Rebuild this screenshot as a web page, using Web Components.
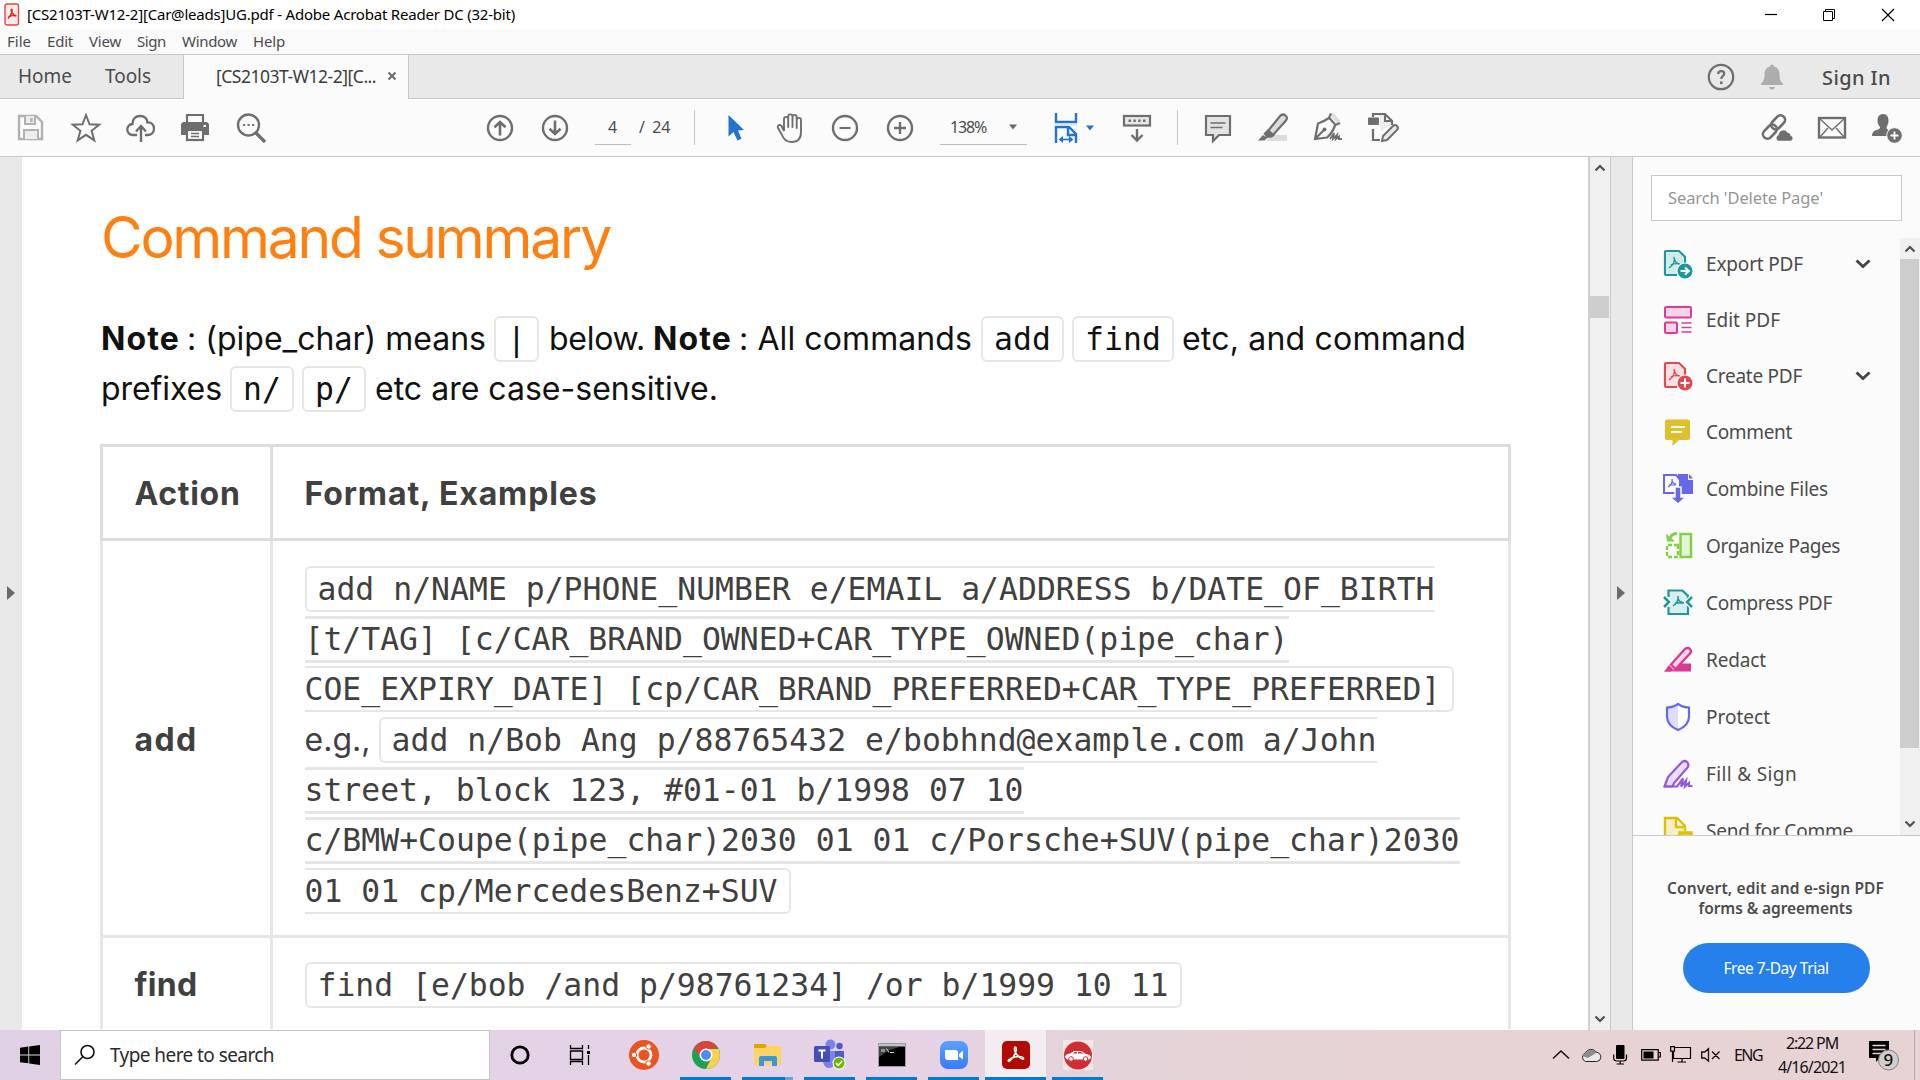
<!DOCTYPE html>
<html lang="en"><head><meta charset="utf-8"><title>Acrobat Reader</title>
<style>
html,body{margin:0;padding:0;width:1920px;height:1080px;overflow:hidden;background:#fff}
body{font-family:"Noto Sans","Open Sans",sans-serif;color:#4b4b4b}
</style></head><body>
<acro-desktop></acro-desktop>
<script>
const G='#6e6e6e';
const page=(c,f)=>`<path d="M3 2h13l6 6v8M14 26H3a1 1 0 0 1-1-1V3a1 1 0 0 1 1-1" fill="none" stroke="${c}" stroke-width="2.2"/><path d="M3 3h12l6 6v8l-7 8H3z" fill="${f}"/><path d="M11 8q2 6-5 11M11 8q1 7 6 7M8 16q4-2 9-1" fill="none" stroke="${c}" stroke-width="1.4"/>`;
const ICONS={
pdf:[16,24,`<rect x="1" y="1" width="13.5" height="21" rx="2" fill="#fbeceb" stroke="#e8443b" stroke-width="1.4"/><path d="M7.4 6c1.6 1 .2 6-3.400 9.500M7.400 6c-1 2 1.600 6.500 5 7M4.500 14q4-2.500 8-1" fill="none" stroke="#e02a20" stroke-width="1.6"/>`],
min:[14,14,`<path d="M1 6.500h12" stroke="#000" stroke-width="1.200"/>`],
max:[14,14,`<path d="M1.500 3.500h9v9h-9zM3.500 3.500v-2h9v9h-2" fill="none" stroke="#000"/>`],
close:[14,14,`<path d="M1 1l12 12M13 1L1 13" stroke="#000" stroke-width="1.200"/>`],
tabx:[10,10,`<path d="M1.500 1.500l7 7M8.500 1.500l-7 7" stroke="#6a6a6a" stroke-width="2"/>`],
help:[28,28,`<circle cx="14" cy="14" r="12.200" fill="none" stroke="${G}" stroke-width="2.200"/><path d="M11 11q.500-2.800 3.200-2.800 3 0 3 2.500 0 1.400-1.700 2.600-1.200.9-1.200 2.700" fill="none" stroke="${G}" stroke-width="2.200"/><rect x="13" y="18.500" width="2.600" height="2.600" fill="${G}"/>`],
bell:[24,28,`<path d="M12 1.500a2 2 0 0 1 2 2c4 1 5.500 4 5.500 8 0 5 1 7 3.500 9v1.500H1V20.500c2.500-2 3.500-4 3.500-9 0-4 1.500-7 5.500-8a2 2 0 0 1 2-2zM9 24h6q-.500 2.500-3 2.500T9 24z" fill="#adadad"/>`],
save:[32,32,`<path d="M4 4h17l6 6v17H4z" fill="none" stroke="#b1b1b1" stroke-width="2.400"/><path d="M10 4v8h10V4M9 27v-9h14v9" fill="#ededed" stroke="#b1b1b1" stroke-width="2"/><path d="M16.500 6v4" stroke="#b1b1b1" stroke-width="2.400"/>`],
star:[32,32,`<path d="M16 3l3.500 9.300 9.700.400-7.600 6.100 2.700 9.500-8.300-5.500-8.300 5.500 2.700-9.500-7.600-6.100 9.700-.400z" fill="none" stroke="${G}" stroke-width="2"/>`],
upload:[32,32,`<path d="M12 23H8a5.500 5.500 0 0 1-.500-11C7.500 6.500 11 4 15 4c4 0 7 2.500 7.500 6.500 4-.5 6.500 2.500 6.500 6 0 3.800-2.500 6.500-6.500 6.500h-2.500" fill="none" stroke="${G}" stroke-width="2.300"/><path d="M16 30V14.500M11 19.500l5-5.500 5 5.500" fill="none" stroke="${G}" stroke-width="2.400"/>`],
print:[32,32,`<path d="M8 10V3h16v7" fill="#fbfbfb" stroke="${G}" stroke-width="2.200"/><path d="M4 10h24l2 2v11H2V12z" fill="${G}"/><rect x="8" y="18" width="16" height="10" fill="#fbfbfb" stroke="${G}" stroke-width="2.200"/><path d="M12 21.500h8M12 24.500h8" stroke="${G}" stroke-width="1.400"/><rect x="24.500" y="13" width="2.500" height="2" fill="#fff"/>`],
find:[32,32,`<circle cx="13.500" cy="13" r="10.500" fill="none" stroke="${G}" stroke-width="2.400"/><path d="M21 21l9 9" stroke="${G}" stroke-width="3.200"/><path d="M8 13h2.200m2.300 0h2.200m2.300 0h2.200" stroke="${G}" stroke-width="2.200"/>`],
up:[28,28,`<circle cx="14" cy="14" r="12" fill="none" stroke="${G}" stroke-width="2.400"/><path d="M14 21.500V8M8.500 13.300L14 8l5.500 5.300" fill="none" stroke="${G}" stroke-width="2.600"/>`],
down:[28,28,`<circle cx="14" cy="14" r="12" fill="none" stroke="${G}" stroke-width="2.400"/><path d="M14 6.500V20M8.500 14.700L14 20l5.500-5.300" fill="none" stroke="${G}" stroke-width="2.600"/>`],
cursor:[18,28,`<path d="M1.500 1v21.500l5-4.500 4 8.500 4-1.800-3.500-8.200 6-.5z" fill="#2274cc"/>`],
hand:[30,32,`<path d="M8 19V7a2 2 0 0 1 4.200 0V15 4.500a2.100 2.100 0 0 1 4.300 0V15 5a2.100 2.100 0 0 1 4.200 0V16 8a2 2 0 0 1 4.300 0v12c0 6-3 10-9.500 10-5.500 0-8-2.500-10-8L2 16c-1-3 2-4 3.500-2L8 19" fill="none" stroke="${G}" stroke-width="1.900" stroke-linejoin="round"/>`],
minus:[28,28,`<circle cx="14" cy="14" r="12" fill="none" stroke="${G}" stroke-width="2.400"/><path d="M8.500 14h11" stroke="${G}" stroke-width="2.200"/>`],
plus:[28,28,`<circle cx="14" cy="14" r="12" fill="none" stroke="${G}" stroke-width="2.400"/><path d="M8 14h12M14 8v12" stroke="${G}" stroke-width="2.400"/>`],
caret:[10,6,`<path d="M1 .5h8l-4 5z" fill="#666"/>`],
caretb:[10,6,`<path d="M1 .5h8l-4 5z" fill="#1f74cb"/>`],
fitw:[24,32,`<path d="M2 1v9h20V1M2 31V15h13l7 7v9M14 15v8h8" fill="none" stroke="#2274cc" stroke-width="2.400"/><path d="M1 12.500h22" stroke="#d4e3f3" stroke-width="2"/><path d="M7 27.500h10" stroke="#2274cc" stroke-width="1.700"/><path d="M9 24v7l-4.500-3.500zM15 24v7l4.500-3.500z" fill="#2274cc"/>`],
kbd:[30,30,`<rect x="2" y="3" width="26" height="9.500" fill="#e8e8e8" stroke="${G}" stroke-width="2.200"/><path d="M6.500 7.700H9m2.400 0h2.400m2.400 0h2.400m2.400 0h2.400" stroke="${G}" stroke-width="2.600"/><path d="M15 16v11M9.500 22l5.500 5.500 5.500-5.500" fill="none" stroke="${G}" stroke-width="2.400"/>`],
comment:[28,30,`<path d="M2 3h24v19H15l-6 6v-6H2z" fill="#e3e3e3" stroke="${G}" stroke-width="2.200"/><path d="M6.500 10h15M6.500 14.500h12" stroke="${G}" stroke-width="1.500"/>`],
marker:[32,32,`<path d="M9 29l6-6h15v6z" fill="#dcdcdc"/><path d="M11 19L23.500 3.500q2.500-2 5 0t.500 5L16 23z" fill="#dcdcdc" stroke="${G}" stroke-width="2.200"/><path d="M11 17l7 6-3 2.500-5.500.500-3-4.500zM6 23l4 3-2.500 2.500H1z" fill="${G}"/>`],
sign:[32,32,`<path d="M18 3l3-2.500 7 8-2.500 3.500z" fill="#ddd"/><path d="M19 1.500l-2 4 6.500 7.500 4.500-2M17 6Q11 10 6 11.500L3 27l12-1.500q5-4 8-12M3 27l8.500-8.500" fill="none" stroke="${G}" stroke-width="2.200"/><circle cx="12.500" cy="17.500" r="2" fill="${G}"/><path d="M18 27l4-6-1 6 4-4-1 4 3-2.500v2.500h3" fill="none" stroke="${G}" stroke-width="1.800"/>`],
pageedit:[32,32,`<path d="M6 5V2h12l7 7v4M6 17v11h7M18 2v7h7" fill="none" stroke="${G}" stroke-width="2.200"/><path d="M12 3h5v7h6v3l-9 6z" fill="#e3e3e3" opacity=".6"/><rect x="1" y="5.500" width="11" height="7.500" rx="1" fill="${G}"/><path d="M15 29l1-5L26 14q2-2 4 0t0 4L20 28z" fill="#e8e8e8" stroke="${G}" stroke-width="1.900"/>`],
link:[32,32,`<g fill="none" stroke="${G}" stroke-width="2.600"><rect x="-7.500" y="-4.500" width="16" height="9" rx="4.500" transform="translate(9.500 20) rotate(-46)"/><rect x="-8.500" y="-4.500" width="16" height="9" rx="4.500" transform="translate(18.500 10) rotate(-46)"/></g><path d="M18 29.500a3.800 3.800 0 0 1 0-7 5.500 5.500 0 0 1 10-2.500q3 .500 3 3a3.400 3.400 0 0 1 0 6.500z" fill="${G}" stroke="#fbfbfb" stroke-width="1.500"/>`],
mail:[30,24,`<rect x="2" y="2" width="26" height="19.500" fill="none" stroke="${G}" stroke-width="2.400"/><path d="M3 3l12 11L27 3M3 21l8-9m16 9l-8-9" fill="none" stroke="${G}" stroke-width="1.400"/>`],
adduser:[32,32,`<path d="M12 1c4 0 5.500 3 5.500 6.500 0 4-1.500 5-2 7q0 2 4.500 3.500l-4 5H1q0-5 4.500-6 4-1 3.500-3C7.500 12 6.500 10.500 6.500 7.500 6.500 4 8 1 12 1z" fill="${G}"/><circle cx="23.500" cy="22.500" r="7.800" fill="${G}" stroke="#fbfbfb" stroke-width="1"/><path d="M19.500 22.500h8m-4-4v8" stroke="#fff" stroke-width="1.800"/>`],
sup:[12,8,`<path d="M1.500 6.500L6 2l4.500 4.500" fill="none" stroke="#505050" stroke-width="2.200"/>`],
sdown:[12,8,`<path d="M1.500 1.500L6 6l4.500-4.500" fill="none" stroke="#505050" stroke-width="2.200"/>`],
tri:[8,14,`<path d="M0 0v14l8-7z" fill="#6a6a6a"/>`],
chev:[16,12,`<path d="M1.500 2.500L8 8.500l6.500-6" fill="none" stroke="#464646" stroke-width="2.800"/>`],
exportp:[30,30,page('#1b989a','#d1eaea')+`<circle cx="22" cy="22" r="8.600" fill="#fbfbfb"/><circle cx="22" cy="22" r="7.500" fill="#1b989a"/><path d="M17.500 22h7M22 18.500l3.800 3.500-3.800 3.500" fill="none" stroke="#fff" stroke-width="2"/>`],
editp:[30,30,`<g fill="#f6d3e6" stroke="#dc3c96" stroke-width="2"><rect x="2" y="2" width="26" height="10.500" rx="1"/><rect x="2" y="17.500" width="12" height="10.500" rx="1"/></g><path d="M18.500 18h10M18.500 22.500h10M18.500 27h10" stroke="#dc3c96" stroke-width="1.300"/>`],
createp:[30,30,page('#e34850','#fae0e1')+`<circle cx="22" cy="22" r="8.600" fill="#fbfbfb"/><circle cx="22" cy="22" r="7.500" fill="#e34850"/><path d="M17.500 22h9M22 17.500v9" stroke="#fff" stroke-width="2"/>`],
commentp:[30,30,`<path d="M4 2.500h21a2 2 0 0 1 2 2V21a2 2 0 0 1-2 2h-9l-6.500 6v-6H4a2 2 0 0 1-2-2V4.500a2 2 0 0 1 2-2z" fill="#dfbf2b"/><path d="M8 10h14M8 15h11" stroke="#fff" stroke-width="2"/>`],
combine:[30,30,`<path d="M15 0h10v6h5v14H15z" fill="#6767ec"/><path d="M26 0l4 4.500h-4z" fill="#6767ec"/><path d="M1 1h12l4 5v13H1z" fill="#fbfbfb" stroke="#6767ec" stroke-width="2"/><path d="M9 5q1 5-4 8M9 5q0 5 4 5M6 11h7" stroke="#6767ec" fill="none" stroke-width="1.200"/><path d="M12 13h6v10h5l-8 7-8-7h5z" fill="#6767ec" stroke="#fbfbfb" stroke-width="1.500"/>`],
organize:[30,30,`<rect x="17.500" y="3" width="10.500" height="23" fill="#e1f3d3" stroke="#83cf41" stroke-width="2.400"/><path d="M15 14H4v12h11z" fill="none" stroke="#83cf41" stroke-width="2.400" stroke-dasharray="4 2"/><path d="M14 2.500Q8 3 7.500 7" fill="none" stroke="#83cf41" stroke-width="2.800"/><path d="M3 2.500l1 8h8z" fill="#83cf41"/>`],
compress:[30,30,`<path d="M5.500 9V2.500h14l5.500 5.500V26H5.500V19" fill="#d9edee" stroke="#1d979d" stroke-width="2.200"/><path d="M1 9l5 5-5 5M29 9l-5 5 5 5" fill="none" stroke="#fbfbfb" stroke-width="5"/><path d="M1 9l5 5-5 5M29 9l-5 5 5 5" fill="none" stroke="#1d979d" stroke-width="2.500"/><path d="M15 8q1 6-5 10M15 9q0 5 6 6M12 15h8" fill="none" stroke="#1d979d" stroke-width="1.500"/>`],
redact:[30,30,`<path d="M9 26.500l9-8h10v8z" fill="#dc3a92"/><path d="M8 19.500L22 4q3-2 5 0t0 4.500L12.500 24z" fill="#f7d8e8" stroke="#dc3a92" stroke-width="2.300"/><path d="M6 20l5 5-3 1.800H1z" fill="#dc3a92"/>`],
protect:[30,30,`<path d="M15 2q5 3.500 11 3.500v9q0 9-11 13.500Q4 23.500 4 14.500v-9Q10 5.500 15 2z" fill="#fff"/><path d="M15 2v26Q4 23.500 4 14.500v-9Q10 5.500 15 2z" fill="#dedef9"/><path d="M15 2q5 3.500 11 3.500v9q0 9-11 13.500Q4 23.500 4 14.500v-9Q10 5.500 15 2z" fill="none" stroke="#6767ec" stroke-width="2.200"/>`],
fill:[30,30,`<path d="M1.500 27.500L5 18 19 3q3-2 5 0t1 5L11 24l-1.500 3.500z" fill="#e9dcf7" stroke="#9458d9" stroke-width="2.200"/><path d="M1 27.500h13l6-8-2 8 5-6-1 6 4-3.500v3h3.500" fill="none" stroke="#9458d9" stroke-width="2.200"/>`],
send:[30,30,`<path d="M2 29V2h12l8 8v5M13 3v8h9" fill="#f6eec6" stroke="#dfbf00" stroke-width="2.400"/><path d="M17 17h11v11H17z" fill="#f6eec6" stroke="#dfbf00" stroke-width="3.500"/>`],
win:[20,20,`<path d="M0 2.800L8.300 1.600v7.900H0zM9.200 1.500L20 0v9.500H9.200zM0 10.400h8.300v7.900L0 17.200zM9.200 10.400H20V20L9.200 18.500z"/>`],
tsearch:[22,22,`<circle cx="13.500" cy="8" r="6.500" fill="none" stroke="#111" stroke-width="1.600"/><path d="M9 12.500L1 20.500" stroke="#111" stroke-width="1.600"/>`],
ring:[22,22,`<circle cx="11" cy="11" r="8.200" fill="none" stroke="#000" stroke-width="2.800"/>`],
task:[22,20,`<path d="M1.500 0v3.500h12V0M1.500 20v-3.500h12V20M1.500 6h12v8.500h-12zM19.500 0v4M19.500 10v10" fill="none" stroke="#000" stroke-width="1.300"/><rect x="18" y="6" width="3" height="3"/>`],
ubuntu:[30,30,`<circle cx="15" cy="15" r="15" fill="#e95420"/><circle cx="15" cy="15" r="7" fill="none" stroke="#fff" stroke-width="2.800"/><g fill="#fff" stroke="#e95420" stroke-width="1"><circle cx="5" cy="15" r="2.700"/><circle cx="19.600" cy="6.500" r="2.700"/><circle cx="19.600" cy="23.500" r="2.700"/></g>`],
chrome:[28,28,`<circle cx="14" cy="14" r="14" fill="#1da159"/><path d="M14 8L1.900 7A14 14 0 0 1 26.100 7z" fill="#d9453c"/><path d="M1.900 7L8.800 17 14 8V5z" fill="#d9453c"/><path d="M14 8H26.600A14 14 0 0 1 14 28l5.200-11z" fill="#fdd04b"/><circle cx="14" cy="14" r="6.500" fill="#fff"/><circle cx="14" cy="14" r="5" fill="#4c8bf5"/>`],
folder:[28,24,`<path d="M0 1h11l2 2v6H0z" fill="#e3a300"/><path d="M0 5h11l2-2h14v19H0z" fill="#fed35f"/><path d="M5 23V15q0-2 2-2h14q2 0 2 2v8h-5v-5h-8v5z" fill="#3b98dc"/>`],
teams:[32,32,`<circle cx="16.500" cy="5.500" r="5" fill="#7b83eb"/><circle cx="25.500" cy="7" r="3.200" fill="#5059c9"/><path d="M9 12h12v12q-1 5-7 5-4-1-5-6z" fill="#7b83eb"/><path d="M21 12h9v9q-1 5-6 5-3 0-3-3z" fill="#5059c9"/><rect x="0" y="7" width="16" height="16" rx="1.500" fill="#464eb8"/><path d="M4.500 11.500h7M8 11.500v8" stroke="#fff" stroke-width="2"/><circle cx="25" cy="24" r="6.500" fill="#fff"/><circle cx="25" cy="24" r="5.500" fill="#6bb700"/><path d="M22 24l2.200 2.300 4-4.300" fill="none" stroke="#fff" stroke-width="1.600"/>`],
cmd:[28,24,`<rect x=".5" y=".5" width="27" height="23" fill="#000" stroke="#9a9ea1"/><rect x="1" y="1" width="26" height="2.500" fill="#bfc4c8"/><path d="M1 4h20q-9 2-20 10z" fill="#444"/><path d="M4 6v3M6 6v3M8.500 5.500l2.500 4M12 9.500h4" stroke="#ddd" stroke-width="1"/>`],
zoom:[28,28,`<defs><linearGradient id="z" x2="0" y2="1"><stop stop-color="#5aa2fb"/><stop offset="1" stop-color="#387bf8"/></linearGradient></defs><rect width="28" height="28" rx="8" fill="url(#z)"/><path d="M5 9h10q3 0 3 3v7H8q-3 0-3-3zM19 13l4-3.500v9L19 15.500z" fill="#fff"/>`],
acro:[28,28,`<rect width="28" height="28" rx="5" fill="#b30b00"/><path d="M13 6c3 0 1 9-6 14.500-2 0-.5-3 6-4.500s9 .5 8.500 2c-1.500 1-8-4-9-9-.2-1.500 0-3 .5-3z" fill="none" stroke="#fff" stroke-width="1.500"/>`],
car:[30,30,`<rect width="30" height="30" fill="#f3e6e6"/><circle cx="15" cy="15.500" r="14" fill="#cf2e33"/><path d="M2 17q0-3 5-3.500l4-2.500h7l5 3q5 .5 5 4l-2 1.500H4z" fill="#fff"/><path d="M9.500 13.500l2.500-1.500h2v1.500zM15 12h3l2.500 1.500H15z" fill="#cf2e33"/><g fill="#fff" stroke="#cf2e33"><circle cx="8" cy="19" r="2.300"/><circle cx="22.500" cy="19" r="2.300"/></g>`],
tup:[18,10,`<path d="M1 8.500L9 1l8 7.500" fill="none" stroke="#111" stroke-width="1.500"/>`],
cloud:[22,16,`<path d="M5.500 14.500a4.500 4.500 0 0 1 0-8.500 6 6 0 0 1 10.500-1q5 1 4.800 5.500-.3 4-4.500 4z" fill="#e9e9e9" stroke="#222"/><path d="M2 9Q4 5.500 6.500 6 9 1.500 13 3q3 1 3 3l-8 5z" fill="#8d8d8d"/>`],
mic:[14,20,`<rect x="3" y="0" width="8.500" height="14" rx="1"/><path d="M.7 9.500V13q0 3 3.300 3h6.500q3 0 3-3V9.500M7.200 16v3M3.500 19h7.500" fill="none" stroke="#000" stroke-width="1.200"/>`],
batt:[20,12,`<path d="M.7.700h16.500v10.500H.700zM17.500 3.500h1.800v4.500h-1.800" fill="none" stroke="#000" stroke-width="1.200"/><rect x="2.500" y="2.500" width="10" height="7"/>`],
net:[22,18,`<path d="M4 1.500h16.500v11H3.500V6M12 12.500V16M7.500 16h8.500" fill="none" stroke="#000" stroke-width="1.200"/><path d="M.7.700h3.800v4.500H.7zM2.500 5v11" fill="#e7d3d4" stroke="#000" stroke-width="1.200"/>`],
mute:[20,14,`<path d="M.7 4h3L7.500.700v12.500L3.700 10h-3zM11 3.500l7.500 7.500M18.500 3.500L11 11" fill="none" stroke="#111" stroke-width="1.300"/>`],
note:[32,32,`<path d="M1 2h20v17h-9l-4 4v-4H1z"/><path d="M4.500 6.500h13M4.500 10.500h13M4.500 14.500h9" stroke="#e7d3d4" stroke-width="1.300"/><circle cx="20.500" cy="21" r="10" fill="#d2cccc" stroke="#858080"/>`]
};
function def(name,html,after){customElements.define(name,class extends HTMLElement{connectedCallback(){if(this.shadowRoot)return;const r=this.attachShadow({mode:'open'});r.innerHTML=typeof html==='function'?html(this):html;if(after)after(this,r)}})}
def('ui-icon',e=>{const [w,h,s]=ICONS[e.getAttribute('n')];return `<style>:host{display:block;flex:none;width:${w}px;height:${h}px}svg{display:block;overflow:visible}</style><svg width="${w}" height="${h}" viewBox="0 0 ${w} ${h}">${s}</svg>`});
/* Single line of text whose tracking is adjusted to reach the width in its w attribute */
def('fit-text',`<style>:host{display:block;flex:none;white-space:pre}span{display:inline-block}</style><span><slot></slot></span>`,(e,r)=>{const w=+e.getAttribute('w'),s=r.querySelector('span');const c=s.getBoundingClientRect().width;if(w&&c)s.style.letterSpacing=(w-c)/e.textContent.length+'px';e.style.width=w+'px'});
/* Inline code chip; open attribute removes the side borders of a wrapped fragment */
def('code-chip',e=>`<style>:host{display:flex;flex:none;box-sizing:border-box;height:46px;margin-top:1px;align-items:center;border:2px solid #e6e6e6;border-radius:6px;padding:0 11px;font-family:"DejaVu Sans Mono",monospace;font-size:31.400px;line-height:42px}
:host([open~=left]){border-left:0;padding-left:0;border-top-left-radius:0;border-bottom-left-radius:0}:host([open~=right]){border-right:0;padding-right:0;border-top-right-radius:0;border-bottom-right-radius:0}:host([open="left right"]){border-width:3px 0;height:47px}</style><fit-text w="${e.getAttribute('w')}">${e.getAttribute('t')}</fit-text>`);
def('title-bar',`<style>:host{display:flex;height:29px;background:#fff;align-items:center;font-size:15px;color:#000;line-height:29px}.g{flex:1}div{display:flex;gap:45px;padding-right:25px}</style>
<ui-icon n="pdf" style="margin:0 7px 0 4px"></ui-icon><fit-text w="488">[CS2103T-W12-2][Car@leads]UG.pdf - Adobe Acrobat Reader DC (32-bit)</fit-text><span class="g"></span><div><ui-icon n="min" style="margin-right:-1px"></ui-icon><ui-icon n="max"></ui-icon><ui-icon n="close"></ui-icon></div>`);
def('menu-bar',`<style>:host{display:flex;height:25px;background:#fafafa;gap:16px;padding-left:7px;font-size:15px;line-height:25px;border-bottom:1px solid #c8c8c8}</style><fit-text w="24">File</fit-text><fit-text w="26">Edit</fit-text><fit-text w="32">View</fit-text><fit-text w="29">Sign</fit-text><fit-text w="55">Window</fit-text><fit-text w="32">Help</fit-text>`);
def('tab-strip',`<style>:host{display:flex;height:44px;background:#e9e9e9;line-height:42px;font-size:19px}.n{display:flex;width:165px;padding-left:18px;gap:33px;border-bottom:1px solid #c8c8c8}.t{box-sizing:border-box;width:226px;height:44px;background:#fbfbfb;border:solid #c8c8c8;border-width:0 1px;display:flex;align-items:center;padding:0 0 2px 32px;gap:11px;font-size:17.500px;color:#3c3c3c}.r{flex:1;border-bottom:1px solid #c8c8c8;display:flex;align-items:center;justify-content:flex-end}</style>
<div class="n"><fit-text w="54">Home</fit-text><fit-text w="46">Tools</fit-text></div><div class="t"><fit-text w="160">[CS2103T-W12-2][C...</fit-text><ui-icon n="tabx"></ui-icon></div><div class="r"><ui-icon n="help"></ui-icon><ui-icon n="bell" style="margin-left:25px"></ui-icon><fit-text w="69" style="margin:2px 29px 0 38px;font-weight:500;font-size:20px">Sign In</fit-text></div>`);
def('tool-bar',`<style>:host{display:flex;height:57px;box-sizing:content-box;background:#fbfbfb;border-bottom:1px solid #c8c8c8;align-items:center;font-size:16px;line-height:57px}div{display:flex;align-items:center;flex:none}.s{width:1px;height:35px;background:#c8c8c8}.f{box-sizing:border-box;height:34px;border-bottom:1px solid #bdbdbd;line-height:32px}</style>
<div style="gap:23px;padding-left:15px;width:471px"><ui-icon n="save"></ui-icon><ui-icon n="star"></ui-icon><ui-icon n="upload"></ui-icon><ui-icon n="print" style="margin:0 1px 0 -1px"></ui-icon><ui-icon n="find"></ui-icon></div>
<div style="gap:27px;width:109px"><ui-icon n="up"></ui-icon><ui-icon n="down"></ui-icon></div>
<div class="f" style="width:36px;padding-left:13px"><fit-text w="9">4</fit-text></div><fit-text w="31" style="margin-left:8px">/  24</fit-text><div class="s" style="margin-left:24px"></div>
<ui-icon n="cursor" style="margin-left:32px"></ui-icon><ui-icon n="hand" style="margin-left:31px"></ui-icon><ui-icon n="minus" style="margin-left:25px"></ui-icon><ui-icon n="plus" style="margin-left:27px"></ui-icon>
<div class="f" style="margin-left:26px;width:87px;padding-left:10px;gap:22px"><fit-text w="36">138%</fit-text><ui-icon n="caret"></ui-icon></div>
<ui-icon n="fitw" style="margin-left:27px"></ui-icon><ui-icon n="caretb" style="margin-left:7px"></ui-icon><ui-icon n="kbd" style="margin-left:27px"></ui-icon><div class="s" style="margin-left:25px"></div>
<ui-icon n="comment" style="margin-left:26px"></ui-icon><ui-icon n="marker" style="margin-left:25px"></ui-icon><ui-icon n="sign" style="margin-left:23px"></ui-icon><ui-icon n="pageedit" style="margin-left:23px"></ui-icon>
<div style="flex:1;justify-content:flex-end;padding-right:17px"><ui-icon n="link"></ui-icon><ui-icon n="mail" style="margin:0 24px 0 25px"></ui-icon><ui-icon n="adduser" style="margin-top:2px"></ui-icon></div>`);
def('pdf-page',`<style>:host{display:block;width:1488px;height:872px;padding-left:78px;background:#fff;overflow:hidden;font-family:Inter,sans-serif;font-size:32px;color:#111;line-height:50px}
h1{margin:0;font-weight:400;font-size:57px;line-height:70px;color:#ff7f11;padding:46px 0 0 1px;height:110px}b,fit-text.b{font-weight:700}.l{display:flex;align-items:center;height:50.350px}.p{height:131px;padding-left:1px}.p fit-text{padding-top:1px}
.t{display:grid;width:1411px;grid-template-columns:173px 1238px;color:#404040;box-sizing:border-box}.t>div{box-sizing:border-box;border-right:3px solid #e6e6e6;border-bottom:3px solid #e6e6e6;padding-left:31.500px}.t>.a{border-left:3px solid #e6e6e6;display:flex;align-items:center;padding-top:3px}.t>.h{border-color:#ddd;border-top:3px solid #ddd;height:97px;display:flex;align-items:center;padding-top:3px}.t .l code-chip{margin-top:0}</style>
<h1><fit-text w="509">Command summary</fit-text></h1>
<div class="p"><div class="l"><fit-text class="b" w="79">Note</fit-text><fit-text w="299" style="margin-left:7px">: (pipe_char) means</fit-text><code-chip w="19" t="|" style="margin-left:8px;"></code-chip><fit-text w="96" style="margin-left:10px">below.</fit-text><fit-text class="b" w="79" style="margin-left:8px">Note</fit-text><fit-text w="233" style="margin-left:7px">: All commands</fit-text><code-chip w="57" t="add" style="margin-left:9px"></code-chip><code-chip w="76" t="find" style="margin-left:8px"></code-chip><fit-text w="284" style="margin-left:8px">etc, and command</fit-text></div>
<div class="l"><fit-text w="121">prefixes</fit-text><code-chip w="38" t="n/" style="margin-left:8px"></code-chip><code-chip w="38" t="p/" style="margin-left:8px"></code-chip><fit-text w="343" style="margin-left:9px">etc are case-sensitive.</fit-text></div></div>
<div class="t"><div class="a h"><fit-text class="b" w="106">Action</fit-text></div><div class="h"><fit-text class="b" w="293">Format, Examples</fit-text></div>
<div class="a" style="height:397px"><fit-text class="b" w="63">add</fit-text></div><div style="padding-top:22.500px">
<div class="l"><code-chip open="right" w="1117" t="add n/NAME p/PHONE_NUMBER e/EMAIL a/ADDRESS b/DATE_OF_BIRTH"></code-chip></div>
<div class="l"><code-chip open="left right" w="984" t="[t/TAG] [c/CAR_BRAND_OWNED+CAR_TYPE_OWNED(pipe_char)"></code-chip></div>
<div class="l"><code-chip open="left" w="1136" t="COE_EXPIRY_DATE] [cp/CAR_BRAND_PREFERRED+CAR_TYPE_PREFERRED]"></code-chip></div>
<div class="l"><fit-text w="66" style="padding-top:1px">e.g.,</fit-text><code-chip open="right" style="margin-left:8px" w="985" t="add n/Bob Ang p/88765432 e/bobhnd@example.com a/John"></code-chip></div>
<div class="l"><code-chip open="left right" w="719" t="street, block 123, #01-01 b/1998 07 10"></code-chip></div>
<div class="l"><code-chip open="left right" w="1155" t="c/BMW+Coupe(pipe_char)2030 01 01 c/Porsche+SUV(pipe_char)2030"></code-chip></div>
<div class="l"><code-chip open="left" w="473" t="01 01 cp/MercedesBenz+SUV"></code-chip></div></div>
<div class="a" style="height:94px"><fit-text class="b" w="63">find</fit-text></div><div style="padding-top:22px"><div class="l"><code-chip w="851" t="find [e/bob /and p/98761234] /or b/1999 10 11"></code-chip></div></div></div>`);
def('scroll-bar',e=>`<style>:host{display:flex;flex-direction:column;align-items:center;background:#f0f0f0}i{display:block;width:19px;align-self:flex-start;background:#cdcdcd;height:${e.getAttribute('len')}px;margin-top:${e.getAttribute('off')}px}ui-icon{margin:${e.getAttribute('pad')||7}px 0}</style><ui-icon n="sup"></ui-icon><i></i><span style="flex:1"></span><ui-icon n="sdown"></ui-icon>`);
def('tool-item',e=>`<style>:host{display:flex;flex:none;align-items:center;height:${e.getAttribute('h')||57}px;padding-left:30px;font-size:19px;line-height:30px}fit-text{margin-left:13px}ui-icon[n=chev]{position:absolute;left:222px}:host{position:relative}</style><ui-icon n="${e.getAttribute('i')}"></ui-icon><fit-text w="${e.getAttribute('w')}">${e.getAttribute('t')}</fit-text>${e.hasAttribute('more')?'<ui-icon n="chev"></ui-icon>':''}`);
def('tools-panel',`<style>:host{display:flex;flex-direction:column;width:287px;height:873px;background:#fbfbfb}.q{flex:none;box-sizing:border-box;width:251px;height:46px;margin:18px 0 0 18px;border:1px solid #c8c8c8;background:#fff;padding-left:16px;font-size:16.500px;line-height:43px;color:#959595}.b{display:flex;height:597px;margin-top:17px;overflow:hidden;border-bottom:1px solid #c8c8c8}.l{width:267px;flex:none;overflow:hidden;display:flex;flex-direction:column;box-sizing:border-box;height:599px;margin-top:-2px}scroll-bar{width:20px}.p{flex:1;display:flex;flex-direction:column;align-items:center;font-size:15.500px;font-weight:600;line-height:20px;padding:42px 2px 0 0}.k{width:187px;height:50px;border-radius:25px;background:#2680eb;color:#fff;font-weight:400;display:flex;justify-content:center;align-items:center;margin:25px 0 0 1px}</style>
<div class="q"><fit-text w="155">Search 'Delete Page'</fit-text></div>
<div class="b"><div class="l"><tool-item h="56" i="exportp" w="97" t="Export PDF" more></tool-item><tool-item h="56" i="editp" w="74" t="Edit PDF"></tool-item><tool-item h="56" i="createp" w="96" t="Create PDF" more></tool-item><tool-item h="56.500" i="commentp" w="86" t="Comment"></tool-item><tool-item i="combine" w="122" t="Combine Files"></tool-item><tool-item i="organize" w="134" t="Organize Pages"></tool-item><tool-item i="compress" w="126" t="Compress PDF"></tool-item><tool-item i="redact" w="60" t="Redact"></tool-item><tool-item i="protect" w="64" t="Protect"></tool-item><tool-item i="fill" w="91" t="Fill &amp;amp; Sign"></tool-item><tool-item i="send" w="147" t="Send for Comme"></tool-item></div><scroll-bar pad="7" off="-1" len="489"></scroll-bar></div>
<div class="p"><fit-text w="217">Convert, edit and e-sign PDF</fit-text><fit-text w="154">forms &amp; agreements</fit-text><div class="k"><fit-text w="105">Free 7-Day Trial</fit-text></div></div>`);
def('work-area',`<style>:host{display:flex;height:873px;overflow:hidden}.s{flex:none;box-sizing:border-box;background:#e9e9e9;display:flex;align-items:center}scroll-bar{box-sizing:border-box;width:22px;border-left:2px solid #d0d0d0}</style>
<div class="s" style="width:22px;padding:0 0 2px 7px"><ui-icon n="tri"></ui-icon></div><pdf-page style="flex:none"></pdf-page><scroll-bar off="117" len="22"></scroll-bar><div class="s" style="width:23px;border:solid #c8c8c8;border-width:0 1px;padding:0 0 2px 6px"><ui-icon n="tri"></ui-icon></div><tools-panel></tools-panel>`);
def('task-app',e=>`<style>:host{display:flex;flex:none;box-sizing:border-box;width:51px;height:50px;align-items:center;justify-content:center;margin-right:11px;border-bottom:3px solid #0078d7;padding-top:3px}:host([idle]){border-color:transparent}:host([active]){width:61px;background:#f3ecf0;margin:0 6px 0 -5px}:host([multi]){border-image:linear-gradient(90deg,#0078d7 80%,#60a8e0 80%) 3}</style><ui-icon n="${e.getAttribute('i')}"></ui-icon>`);
def('task-bar',`<style>:host{display:flex;height:50px;align-items:center;background:linear-gradient(90deg,#e0d0e4,#e5d2e6 35%,#e6d2e6 45%,#e4d3d8 60%,#e7d3d4 72%,#e7d3d4);color:#111}.s{box-sizing:border-box;width:430px;height:50px;border:1px solid #c6c3c8;background:#fff;display:flex;align-items:center;padding-left:13px;margin:0 19px 0 20px;font-size:19px;color:#2b2b2b;gap:14px;line-height:46px}.g{flex:1}.c{display:flex;flex-direction:column;align-items:center;font-size:16px;line-height:24px;width:68px;margin-left:16px}.n{display:grid;margin-left:22px;margin-top:-1px}.n>*{grid-area:1/1}.n span{z-index:1;font-size:17px;font-weight:500;padding:11px 0 0 15.500px;line-height:20px}</style>
<ui-icon n="win" style="margin-left:20px"></ui-icon><div class="s"><ui-icon n="tsearch"></ui-icon><fit-text w="164">Type here to search</fit-text></div><ui-icon n="ring"></ui-icon><ui-icon n="task" style="margin:0 27px 0 38px"></ui-icon>
<task-app i="ubuntu" idle></task-app><task-app i="chrome"></task-app><task-app i="folder" multi></task-app><task-app i="teams"></task-app><task-app i="cmd"></task-app><task-app i="zoom"></task-app><task-app i="acro" active></task-app><task-app i="car"></task-app><span class="g"></span>
<ui-icon n="tup"></ui-icon><ui-icon n="cloud" style="margin-left:10px"></ui-icon><ui-icon n="mic" style="margin-left:11px"></ui-icon><ui-icon n="batt" style="margin-left:14px"></ui-icon><ui-icon n="net" style="margin-left:9px"></ui-icon><ui-icon n="mute" style="margin-left:9px"></ui-icon><fit-text w="28" style="margin-left:13px;font-size:16px">ENG</fit-text>
<div class="c"><fit-text w="52">2:22 PM</fit-text><fit-text w="68">4/16/2021</fit-text></div><div class="n"><ui-icon n="note"></ui-icon><span>9</span></div><i style="width:1px;height:50px;background:#b5a5a8;margin:0 5px 0 14px"></i>`);
def('acro-desktop',`<style>:host{display:flex;flex-direction:column;width:1920px;height:1080px;overflow:hidden}</style><title-bar></title-bar><menu-bar></menu-bar><tab-strip></tab-strip><tool-bar></tool-bar><work-area></work-area><task-bar></task-bar>`);
</script></body></html>
